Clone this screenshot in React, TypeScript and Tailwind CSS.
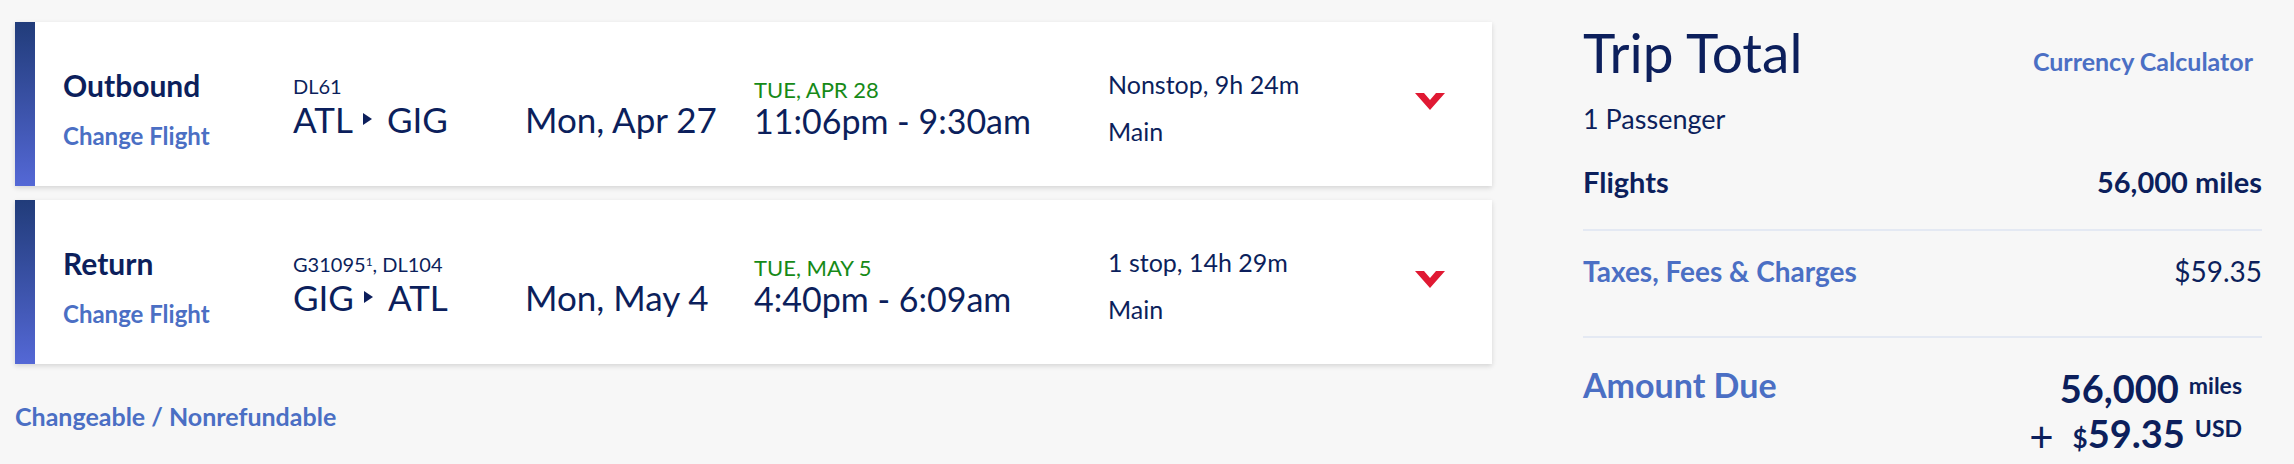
import React from 'react';

type Flight = {
  label: string;
  flight: React.ReactNode;
  from: string;
  to: string;
  date: string;
  arrDate: string;
  times: string;
  stops: string;
};

const flights: Flight[] = [
  {
    label: 'Outbound',
    flight: 'DL61',
    from: 'ATL',
    to: 'GIG',
    date: 'Mon, Apr 27',
    arrDate: 'TUE, APR 28',
    times: '11:06pm - 9:30am',
    stops: 'Nonstop, 9h 24m',
  },
  {
    label: 'Return',
    flight: (
      <>
        G31095<sup className="text-[12px]">1</sup>, DL104
      </>
    ),
    from: 'GIG',
    to: 'ATL',
    date: 'Mon, May 4',
    arrDate: 'TUE, MAY 5',
    times: '4:40pm - 6:09am',
    stops: '1 stop, 14h 29m',
  },
];

function FlightCard({ f }: { f: Flight }) {
  return (
    <div className="flex h-[164px] bg-white shadow-[0_2px_5px_rgba(0,0,0,0.14)]">
      <div className="w-[20px] bg-linear-to-b from-[#213c7a] to-[#5468d6]" />
      <div className="grid grid-cols-[230px_232px_229px_354px_308px_30px] pl-[28px]">
        {/* label + change */}
        <div className="pt-[48px]">
          <div className="text-[30px] font-bold leading-none">{f.label}</div>
          <div className="mt-[24px] text-[24px] font-bold leading-none text-[#4b6fc4]">Change Flight</div>
        </div>

        {/* flight number + route */}
        <div className="pt-[53.6px]">
          <div className="text-[20px] leading-none">{f.flight}</div>
          <div className="mt-[6.4px] flex items-center text-[35px] leading-none">
            <span>{f.from}</span>
            <svg width="9" height="12" viewBox="0 0 9 12" className="ml-[10px] mr-[15px]">
              <polygon points="0,0 9,6 0,12" fill="#0c1f5c" />
            </svg>
            <span>{f.to}</span>
          </div>
        </div>

        {/* departure date */}
        <div className="pt-[80px] text-[35px] leading-none">{f.date}</div>

        {/* arrival + times */}
        <div className="pt-[57px]">
          <div className="text-[22px] leading-none text-[#168a17]">{f.arrDate}</div>
          <div className="mt-[3px] text-[34px] leading-none">{f.times}</div>
        </div>

        {/* stops + cabin */}
        <div className="pt-[50px] text-[25px] leading-none">
          <div>{f.stops}</div>
          <div className="mt-[22px]">Main</div>
        </div>

        {/* expand chevron */}
        <div className="-ml-[1px] pt-[71px]">
          <svg width="30" height="17" viewBox="0 0 30 17">
            <polygon points="0,0 9,0 15,7 21,0 30,0 15,17" fill="#e01933" />
          </svg>
        </div>
      </div>
    </div>
  );
}

export default function App() {
  return (
    <div className="flex h-[464px] w-[2294px] overflow-hidden bg-[#f7f7f7] pl-[15px] font-[Lato,sans-serif] text-[#0c1f5c]">
      {/* left: itinerary */}
      <div className="w-[1477px] pt-[22px]">
        <FlightCard f={flights[0]} />
        <div className="mt-[14px]">
          <FlightCard f={flights[1]} />
        </div>
        <div className="mt-[40px] text-[25px] font-bold leading-none text-[#4b6fc4]">Changeable / Nonrefundable</div>
      </div>

      {/* right: trip total */}
      <div className="ml-[91px] w-[679px] pt-[25px]">
        <div className="flex items-start justify-between">
          <h2 className="text-[55px] leading-none">Trip Total</h2>
          <span className="mr-[9px] mt-[23.5px] text-[25px] font-bold leading-none text-[#4b6fc4]">Currency Calculator</span>
        </div>
        <div className="mt-[25px] text-[27px] leading-none">1 Passenger</div>

        <div className="mt-[34.5px] flex justify-between text-[29px] font-bold leading-none">
          <span>Flights</span>
          <span>56,000 miles</span>
        </div>
        <div className="mt-[33px] h-[2px] bg-[#e4e9f3]" />

        <div className="mt-[26px] flex justify-between text-[28px] leading-none">
          <span className="font-bold text-[#4b6fc4]">Taxes, Fees &amp; Charges</span>
          <span>$59.35</span>
        </div>
        <div className="mt-[51px] h-[2px] bg-[#e4e9f3]" />

        <div className="mt-[30px] flex items-start justify-between">
          <span className="text-[34px] font-bold leading-none text-[#4b6fc4]">Amount Due</span>
          <div className="mr-[20px] mt-[1.5px] flex flex-col items-end font-bold">
            <div className="flex items-start">
              <span className="text-[38px] leading-none">56,000</span>
              <span className="ml-[10px] mt-[4.5px] text-[23px] leading-none">miles</span>
            </div>
            <div className="mt-[7px] flex items-start">
              <span className="mr-[19px] mt-[1px] text-[42px] font-normal leading-none">+</span>
              <span className="mt-[10.5px] text-[26px] leading-none">$</span>
              <span className="text-[38px] leading-none">59.35</span>
              <span className="ml-[10px] mt-[2.5px] text-[23px] leading-none">USD</span>
            </div>
          </div>
        </div>
      </div>
    </div>
  );
}
